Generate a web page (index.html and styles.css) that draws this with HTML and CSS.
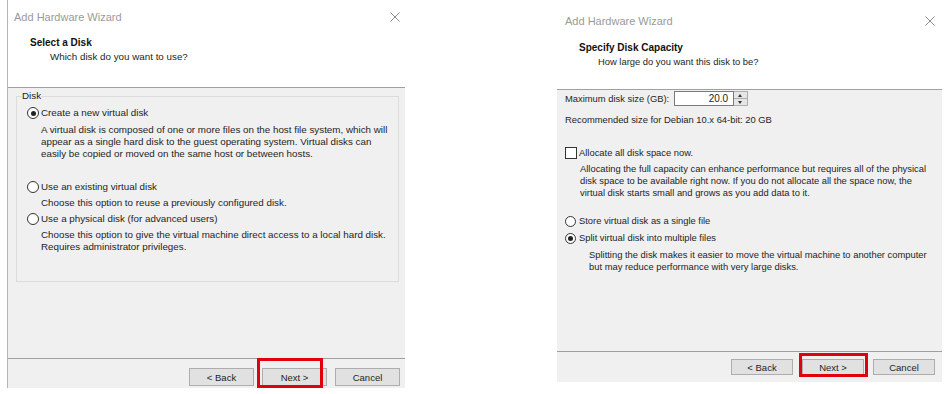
FILE: index.html
```html
<!DOCTYPE html>
<html lang="en">
<head>
    <meta charset="utf-8"/>
    <meta content="width=device-width, initial-scale=1.0" name="viewport"/>
    <title>Add Hardware Wizard</title>
    <link rel="stylesheet" href="styles.css">
</head>
<body>
    <div class="screen">
        <!-- step 1: select a disk -->
        <section class="wizard wizard-left">
            <div class="wiz-head">
                <div class="titlebar">
                    <span class="title">Add Hardware Wizard</span>
                    <svg class="close" width="10" height="10" viewBox="0 0 10 10">
                        <path d="M0.5 0.5 L9.5 9.5 M9.5 0.5 L0.5 9.5" stroke="#8c8c8c" stroke-width="1" fill="none"/>
                    </svg>
                </div>
                <div class="heading">
                    <div class="h-title">Select a Disk</div>
                    <div class="h-sub">Which disk do you want to use?</div>
                </div>
            </div>
            <div class="wiz-body">
                <fieldset class="group">
                    <legend>Disk</legend>
                    <div class="opt-list">
                        <div class="opt first">
                            <span class="radio checked"></span>
                            <span>Create a new virtual disk</span>
                        </div>
                        <p class="desc">A virtual disk is composed of one or more files on the host file system, which will appear as a single hard disk to the guest operating system. Virtual disks can easily be copied or moved on the same host or between hosts.</p>
                        <div class="opt second">
                            <span class="radio"></span>
                            <span>Use an existing virtual disk</span>
                        </div>
                        <p class="desc">Choose this option to reuse a previously configured disk.</p>
                        <div class="opt">
                            <span class="radio"></span>
                            <span>Use a physical disk (for advanced users)</span>
                        </div>
                        <p class="desc">Choose this option to give the virtual machine direct access to a local hard disk. Requires administrator privileges.</p>
                    </div>
                </fieldset>
            </div>
            <div class="wiz-foot">
                <button class="btn">&lt; Back</button>
                <button class="btn marked">Next &gt;</button>
                <button class="btn">Cancel</button>
            </div>
        </section>

        <!-- step 2: disk capacity -->
        <section class="wizard wizard-right">
            <div class="wiz-head">
                <div class="titlebar">
                    <span class="title">Add Hardware Wizard</span>
                    <svg class="close" width="10" height="10" viewBox="0 0 10 10">
                        <path d="M0.5 0.5 L9.5 9.5 M9.5 0.5 L0.5 9.5" stroke="#8c8c8c" stroke-width="1" fill="none"/>
                    </svg>
                </div>
                <div class="heading">
                    <div class="h-title">Specify Disk Capacity</div>
                    <div class="h-sub">How large do you want this disk to be?</div>
                </div>
            </div>
            <div class="wiz-body">
                <div class="size-row">
                    <span>Maximum disk size (GB):</span>
                    <div class="spin">
                        <span class="spin-value">20.0</span>
                        <span class="spin-btns">
                            <span class="spin-up"></span>
                            <span class="spin-down"></span>
                        </span>
                    </div>
                </div>
                <div class="recommend">Recommended size for Debian 10.x 64-bit: 20 GB</div>
                <div class="opt check-row">
                    <span class="checkbox"></span>
                    <span>Allocate all disk space now.</span>
                </div>
                <p class="desc check-desc">Allocating the full capacity can enhance performance but requires all of the physical disk space to be available right now. If you do not allocate all the space now, the virtual disk starts small and grows as you add data to it.</p>
                <div class="opt store-row">
                    <span class="radio"></span>
                    <span>Store virtual disk as a single file</span>
                </div>
                <div class="opt split-row">
                    <span class="radio checked"></span>
                    <span>Split virtual disk into multiple files</span>
                </div>
                <p class="desc split-desc">Splitting the disk makes it easier to move the virtual machine to another computer but may reduce performance with very large disks.</p>
            </div>
            <div class="wiz-foot">
                <button class="btn">&lt; Back</button>
                <button class="btn marked">Next &gt;</button>
                <button class="btn">Cancel</button>
            </div>
        </section>
    </div>
</body>
</html>
```
FILE: styles.css
```css
body {
    margin: 0;
    background-color: #ffffff;
    font-family: "Liberation Sans", Arial, sans-serif;
    color: #1e1e1e;
}

.screen {
    display: flex;
    align-items: flex-start;
}

.wizard {
    display: flex;
    flex-direction: column;
    background-color: #f0f0f0;
    font-size: 9.8px;
    line-height: 12px;
    box-sizing: border-box;
}

.wizard-left {
    width: 398px;
    height: 388px;
    margin-left: 7px;
    border-left: 1px solid #b4b4b4;
}

.wizard-right {
    width: 385px;
    height: 378px;
    margin: 4px 0 0 152px;
    font-size: 9.4px;
}

/* header */
.wiz-head {
    background-color: #ffffff;
    border-bottom: 1px solid #a0a0a0;
    box-sizing: border-box;
}

.wizard-left .wiz-head {
    height: 88px;
}

.wizard-right .wiz-head {
    height: 86px;
}

.titlebar {
    display: flex;
    align-items: center;
    justify-content: space-between;
    padding: 11px 5px 0 6px;
    height: 12px;
}

.wizard-right .titlebar {
    padding: 11px 7px 0 8px;
}

.title {
    font-size: 11px;
    color: #9a9a9a;
}

.heading {
    margin-top: 13px;
    padding-left: 22px;
}

.wizard-right .heading {
    margin-top: 14px;
}

.h-title {
    font-weight: bold;
    font-size: 10px;
    line-height: 14px;
    color: #111;
}

.h-sub {
    margin-top: 1px;
    padding-left: 20px;
}

.wizard-right .h-sub {
    padding-left: 19px;
}

/* body */
.wiz-body {
    flex: 1;
}

.wizard-right .wiz-body {
    padding-left: 8px;
}

.group {
    margin: 2px 6px 0 8px;
    padding: 0 5px 28px 5px;
    border: 1px solid #dcdcdc;
}

.group legend {
    padding: 0;
    line-height: 12px;
}

.opt-list {
    padding-left: 5px;
}

.opt {
    display: flex;
    align-items: center;
    gap: 2px;
    height: 14px;
    margin-top: 3px;
}

.opt.first {
    margin-top: 4px;
}

.opt.second {
    margin-top: 20px;
}

.desc {
    margin: 3px 0 0 0;
    padding-left: 14px;
}

.opt.first + .desc {
    margin-top: 4px;
}

.group .desc {
    padding-right: 2px;
}

.radio {
    width: 12px;
    height: 12px;
    border: 1px solid #333;
    border-radius: 50%;
    background-color: #fff;
    box-sizing: border-box;
    position: relative;
    flex-shrink: 0;
}

.radio.checked::after {
    content: "";
    position: absolute;
    left: 2.5px;
    top: 2.5px;
    width: 5px;
    height: 5px;
    border-radius: 50%;
    background-color: #222;
}

.wizard-right .radio {
    width: 11px;
    height: 11px;
}

.wizard-right .radio.checked::after {
    left: 2px;
    top: 2px;
}

.checkbox {
    width: 12px;
    height: 12px;
    border: 1px solid #333;
    background-color: #fff;
    box-sizing: border-box;
    flex-shrink: 0;
}

.size-row {
    display: flex;
    align-items: center;
    gap: 5px;
    margin-top: 1px;
    height: 15px;
}

.spin {
    display: flex;
    height: 15px;
}

.spin-value {
    width: 60px;
    box-sizing: border-box;
    border: 1px solid #7a7a7a;
    background-color: #fff;
    text-align: right;
    padding-right: 5px;
    line-height: 13px;
    font-size: 10px;
}

.spin-btns {
    display: flex;
    flex-direction: column;
    width: 14px;
    border: 1px solid #adadad;
    border-left: none;
    box-sizing: border-box;
}

.spin-up,
.spin-down {
    flex: 1;
    background-color: #e6e6e6;
    position: relative;
}

.spin-up {
    border-bottom: 1px solid #adadad;
}

.spin-up::after,
.spin-down::after {
    content: "";
    position: absolute;
    left: 4px;
    border-left: 2.5px solid transparent;
    border-right: 2.5px solid transparent;
}

.spin-up::after {
    top: 2px;
    border-bottom: 3px solid #333;
}

.spin-down::after {
    top: 2px;
    border-top: 3px solid #333;
}

.recommend {
    margin-top: 8px;
}

.check-row {
    margin-top: 20px;
    gap: 2px;
}

.check-desc {
    padding-left: 15px;
    padding-right: 6px;
}

.store-row {
    margin-top: 15px;
    gap: 3px;
}

.split-row {
    margin-top: 3px;
    gap: 3px;
}

.split-desc {
    margin-top: 4px;
    padding-left: 24px;
}

/* footer */
.wiz-foot {
    display: flex;
    justify-content: flex-end;
    gap: 8px;
    border-top: 1px solid #a0a0a0;
    box-sizing: border-box;
}

.wizard-left .wiz-foot {
    height: 30px;
    padding: 9px 5px 0 0;
}

.wizard-right .wiz-foot {
    height: 31px;
    padding: 7px 7px 0 0;
    gap: 9px;
}

.btn {
    font-family: "Liberation Sans", Arial, sans-serif;
    font-size: 9.5px;
    color: #1e1e1e;
    background-color: #e1e1e1;
    border: 1px solid #adadad;
    padding: 0;
    position: relative;
}

.wizard-left .btn {
    width: 65px;
    height: 18px;
}

.wizard-right .btn {
    width: 62px;
    height: 16px;
}

/* red annotation frame around the Next button */
.btn.marked::after {
    content: "";
    position: absolute;
    border: 3px solid #e0000f;
    pointer-events: none;
}

.wizard-left .btn.marked::after {
    left: -6px;
    right: 3px;
    top: -11px;
    bottom: -3px;
}

.wizard-right .btn.marked::after {
    left: -4px;
    right: -5px;
    top: -7px;
    bottom: -3px;
}
```
